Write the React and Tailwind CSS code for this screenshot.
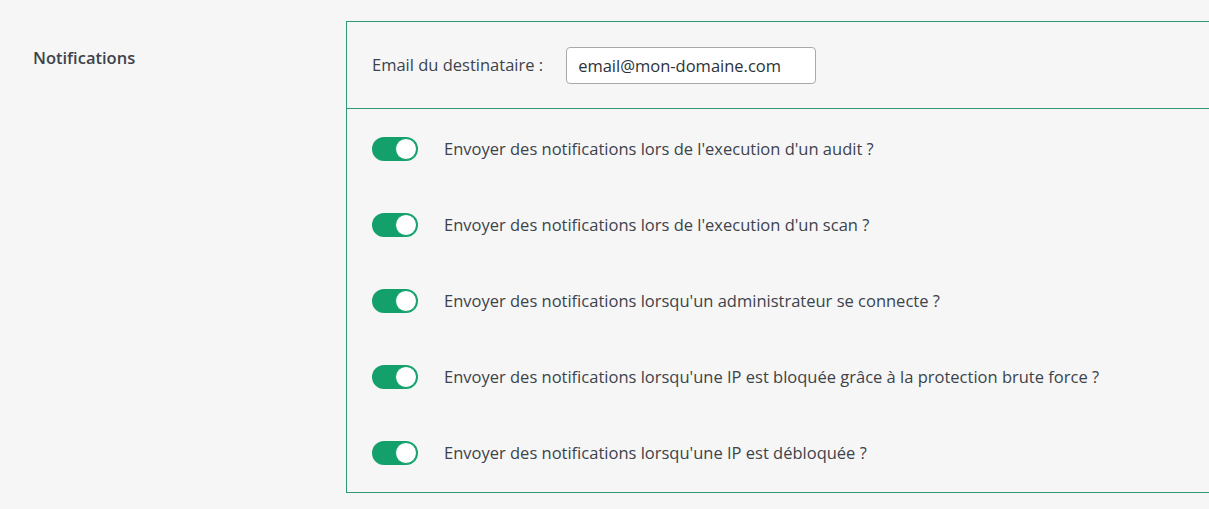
import React, { useState } from 'react';

const items = [
  "Envoyer des notifications lors de l'execution d'un audit ?",
  "Envoyer des notifications lors de l'execution d'un scan ?",
  "Envoyer des notifications lorsqu'un administrateur se connecte ?",
  "Envoyer des notifications lorsqu'une IP est bloquée grâce à la protection brute force ?",
  "Envoyer des notifications lorsqu'une IP est débloquée ?",
];

function Toggle({ on, onChange }) {
  return (
    <button
      type="button"
      onClick={onChange}
      className={`relative h-[24px] w-[46px] shrink-0 rounded-full ${on ? 'bg-[#14a06a]' : 'bg-[#c3c4c7]'}`}
    >
      <span
        className={`absolute top-px h-[22px] w-[22px] rounded-full border border-[#14a06a] bg-white ${on ? 'left-[23px]' : 'left-px'}`}
      />
    </button>
  );
}

export default function App() {
  const [values, setValues] = useState(items.map(() => true));

  return (
    <div className="min-h-[509px] bg-[#f6f6f6] text-[#3c434a] font-['Open_Sans','Noto_Sans',sans-serif] text-[16.5px]">
      <div className="flex pt-[21px]">
        <div className="w-[346px] shrink-0 pl-[33px] pt-[25px] text-[16.5px] font-semibold text-[#3c434a]">
          Notifications
        </div>
        <div className="flex-1 border-y border-l border-[#2e9a70] -mr-px">
          <div className="flex h-[87px] items-center gap-[23px] border-b border-[#2e9a70] pl-[25px]">
            <span>Email du destinataire :</span>
            <input
              defaultValue="email@mon-domaine.com"
              className="h-[37px] w-[250px] rounded-[4px] border border-[#a7aaad] bg-white px-[11px] text-[16.5px] text-[#2c3338] outline-none"
            />
          </div>
          <div className="flex flex-col gap-[52px] pl-[25px] pt-[28px] pb-[27px]">
            {items.map((label, i) => (
              <div key={i} className="flex h-[24px] items-center gap-[26px]">
                <Toggle
                  on={values[i]}
                  onChange={() => setValues(values.map((v, j) => (j === i ? !v : v)))}
                />
                <span className="pt-px">{label}</span>
              </div>
            ))}
          </div>
        </div>
      </div>
    </div>
  );
}
